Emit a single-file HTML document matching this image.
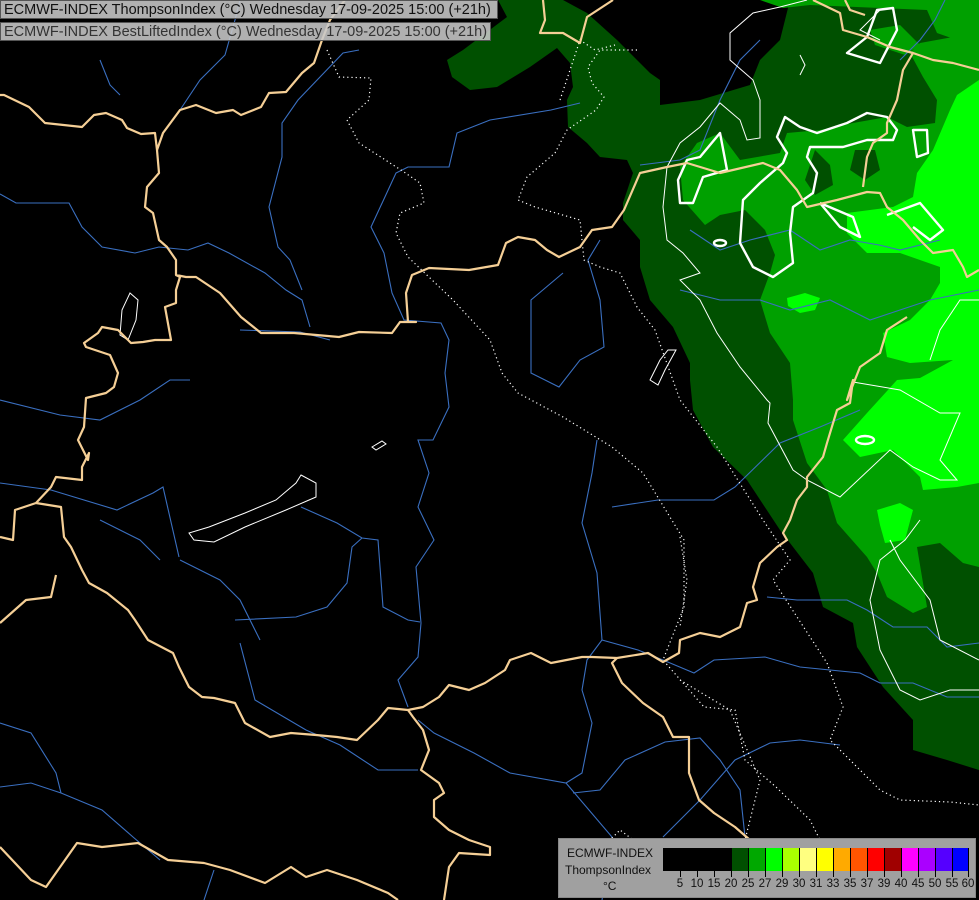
<!DOCTYPE html>
<html><head><meta charset="utf-8"><style>
html,body{margin:0;padding:0;background:#000;}
body{width:979px;height:900px;position:relative;overflow:hidden;font-family:"Liberation Sans",sans-serif;}
svg{position:absolute;left:0;top:0;}
.hdr{position:absolute;left:0;height:19px;background:rgba(200,200,200,0.88);color:#111;font-size:14.5px;line-height:19px;padding-left:3px;white-space:nowrap;border:1px solid #555;box-sizing:border-box;}
.leg{position:absolute;left:558px;top:838px;width:418px;height:60px;background:#a0a0a0;border:1px solid #888;box-sizing:border-box;}
.lt{position:absolute;font-size:12px;color:#111;}
.sw{position:absolute;top:9px;height:23px;width:17px;border-left:1px solid #000;box-sizing:border-box;}
.tk{position:absolute;top:32px;width:1px;height:6px;background:#000;}
.lb{position:absolute;top:39px;font-size:11.5px;color:#111;width:20px;text-align:center;}
</style></head><body>
<svg width="979" height="900" viewBox="0 0 979 900">
<!-- dark green -->
<polygon fill="#005000" points="498,0 563,0 587,13 617,40 650,73 660,80 660,105 700,100 750,85 760,60 780,40 790,0 979,0 979,770 947,760 913,750 913,720 883,687 857,647 853,623 823,607 813,573 780,530 747,480 713,447 693,410 690,380 690,363 673,327 650,300 640,267 640,240 623,220 623,203 633,173 627,160 600,157 587,143 568,127 567,100 573,87 570,63 557,48 530,67 497,87 470,90 452,77 447,60 463,50 507,17"/>
<!-- medium green -->
<polygon fill="#00a000" points="760,0 979,0 979,40 957,40 937,33 927,10 880,8 810,5 783,8"/>
<polygon fill="#00a000" points="870,30 900,25 920,45 905,55 875,45"/>
<polygon fill="#00a000" points="979,40 953,37 920,43 910,53 923,77 937,100 935,123 907,127 887,117 853,123 820,130 787,133 780,153 740,160 720,133 697,143 680,167 683,200 705,225 720,215 745,210 765,230 775,255 770,273 760,300 770,333 790,363 793,400 793,420 807,463 827,490 837,523 867,557 877,573 887,597 913,613 927,607 917,547 940,543 963,563 979,567"/>
<polygon fill="#005000" points="815,150 830,165 833,185 815,195 805,180"/>
<polygon fill="#005000" points="855,150 875,150 880,170 865,180 850,170"/>
<!-- bright green -->
<polygon fill="#00ff00" points="979,80 957,95 950,110 933,150 917,173 913,197 893,207 847,213 847,233 867,253 900,253 940,267 940,283 930,300 910,320 883,333 887,357 910,363 953,360 920,378 897,380 867,413 843,440 860,457 893,450 920,477 923,490 957,487 979,483"/>
<polygon fill="#00ff00" points="787,298 805,293 820,298 815,310 800,313 788,306"/>
<polygon fill="#00ff00" points="877,510 900,503 913,510 905,540 885,543 880,525"/>
<!-- rivers -->
<g fill="none" stroke="#3a6fc0" stroke-width="1.1">
<polyline points="0,194 16,203 69,203 82,227 102,247 135,253 159,247 188,250 208,243 229,253 265,273 286,290 302,300 310,327"/>
<polyline points="359,50 343,53 298,100 282,123 282,157 269,207 278,247 290,260 302,290"/>
<polyline points="580,103 551,110 490,120 457,133 449,167 408,167 396,173 371,227 384,253 392,293 404,320 441,323 449,340 445,373 449,407 433,440 418,440 429,473 418,507 434,540 416,567 421,623 418,657 398,680 408,707"/>
<polyline points="563,273 531,300 531,373 559,387 580,360 604,347 600,300 588,260 600,240"/>
<polyline points="0,483 51,490 117,510 153,493 163,487 179,557"/>
<polyline points="301,507 337,523 362,538 378,540 383,607 408,620 420,622"/>
<polyline points="235,620 296,617 327,607 347,583 352,547 362,538"/>
<polyline points="240,643 255,700 306,730 340,745 378,770 418,770"/>
<polyline points="597,440 592,473 582,523 597,573 602,640 587,660 582,690 592,723 582,773 566,783 510,773 474,753 434,733 418,720"/>
<polyline points="602,640 638,650 663,660 694,673 714,660 765,657 800,667 860,673 880,683 913,683 947,697 979,697"/>
<polyline points="612,507 658,500 714,500 735,487 780,443 820,427 860,410"/>
<polyline points="767,597 797,600 847,600 867,610 893,627 927,627 947,647 979,643"/>
<polyline points="0,723 31,733 56,773 61,793 102,810 133,837 160,860"/>
<polyline points="0,787 31,783 61,793"/>
<polyline points="204,900 214,870"/>
<polyline points="566,783 612,837 602,900"/>
<polyline points="663,837 700,800 735,760 770,743 800,740 840,745"/>
<polyline points="573,793 600,790 625,760 665,742 700,738 720,760 740,790 745,837"/>
<polyline points="0,400 60,415 100,420 140,400 170,380 190,380"/>
<polyline points="180,110 200,80 225,55 235,20 240,0"/>
<polyline points="100,60 110,85 120,95"/>
<polyline points="640,165 680,160 700,150 720,100 740,60 760,40"/>
<polyline points="690,230 720,250 750,240 790,230 820,250 850,240 879,245 900,250 940,240"/>
<polyline points="680,290 720,300 760,300 790,310 830,300 870,320 900,310 930,300 979,290"/>
<polyline points="900,60 920,40 935,20 945,0"/>
<polyline points="240,330 300,332 330,340"/>
<polyline points="180,560 220,580 240,600 260,640"/>
<polyline points="100,520 140,540 160,560"/>
</g>
<!-- dotted white -->
<g fill="none" stroke="#fff" stroke-width="1.2" stroke-dasharray="1.2,3">
<polyline points="327,50 339,77 371,78 369,100 347,120 359,143 404,172 420,183 424,203 400,213 396,233 408,257 453,300 490,340 502,373 518,393 563,417 612,447 643,473 684,540 684,607 663,660 704,707 735,710 745,760 776,787 810,820 830,860"/>
<polyline points="637,50 600,50 588,67 592,83 604,97 596,110 567,130 555,153 527,177 518,200 535,207 580,220 584,260 600,267 620,273 637,307 655,330 680,400 717,447 763,520 790,560 773,580 827,663 843,707 830,740 853,763 880,790 900,800 950,802 979,805"/>
<polyline points="560,100 580,40 595,50 615,45"/>
<polyline points="680,537 687,580 680,627"/>
<polyline points="680,680 730,710 760,780 745,840"/>
<polyline points="600,850 620,830 640,845"/>
</g>
<!-- white thin contours -->
<g fill="none" stroke="#fff" stroke-width="1">
<polyline points="807,0 780,7 753,13 730,33 730,60 753,80 760,100 760,138 747,140 740,120 720,103 700,127 680,143 667,167 663,207 667,240 683,253 700,273 680,280 700,300 717,333 740,367 767,400 770,403 768,423 793,470 807,480 840,497 890,450 913,467 940,480 957,480 940,460 960,413 940,413 900,390 853,382"/>
<polyline points="920,520 905,540 880,560 870,600 880,650 900,690 920,700 950,690 979,690"/>
<polyline points="890,540 900,560 930,600 940,640 979,660"/>
<polyline points="980,300 960,300 940,330 930,360"/>
<polyline points="880,10 860,30 880,40"/>
<polygon points="301,475 316,483 316,497 286,510 245,527 214,542 194,540 189,533 209,527 245,513 276,500 296,483"/>
<polygon points="130,293 138,300 136,320 128,340 120,335 122,310"/>
<polygon points="372,447 382,441 386,444 376,450"/>
<polygon points="650,380 660,360 668,350 676,350 665,370 658,385"/>
<polyline points="800,55 805,65 800,75"/>
</g>
<!-- white thick contours -->
<g fill="none" stroke="#fff" stroke-width="2.4" stroke-linejoin="round">
<polygon points="777,137 785,117 800,127 817,133 847,123 867,113 887,117 897,130 893,140 867,140 843,147 810,147 807,157 817,173 813,193 793,207 790,233 793,263 773,277 753,267 740,243 743,200 760,183 783,163 787,153"/>
<polygon points="720,133 727,170 703,177 693,203 680,203 678,180 687,160 700,157"/>
<polygon points="877,10 893,8 897,30 880,63 847,53 867,37"/>
<polygon points="913,130 927,130 928,153 917,157"/>
<polyline points="820,203 853,217 860,237 840,227 820,203"/>
<polyline points="887,215 920,203 943,230 930,240 913,227"/>
<ellipse cx="865" cy="440" rx="9" ry="4"/>
<ellipse cx="720" cy="243" rx="6" ry="3"/>
</g>
<!-- borders -->
<g fill="none" stroke="#f5cf96" stroke-width="2.2" stroke-linejoin="round">
<polyline points="0,95 4,95 29,107 45,123 82,127 94,115 106,113 122,120 127,128 141,134 155,133 157,150 159,173 147,187 145,207 153,213 159,240 167,247 176,260 176,275 186,277 196,277 220,293 241,317 261,333 294,333 339,337 359,332 392,333 400,322 416,322 408,322 406,293 412,275 429,268 469,270 498,265 506,243 518,237 535,240 547,250 559,257 580,247 592,230 612,227 624,210 640,173 667,167 687,163 720,173 763,163 780,170 797,190 807,207 837,200 867,192 880,193 887,207 903,220 920,240 933,253 953,250 963,267 967,277 979,270"/>
<polyline points="157,150 163,133 180,110 196,105 216,113 233,110 241,115 261,107 269,93 286,92 302,73 314,63 322,40 330,20 345,0"/>
<polyline points="176,275 180,277 176,290 176,303 165,307 171,340 155,340 143,342 131,343 118,330 102,327 98,333 84,343 86,347 110,355 118,373 114,387 106,393 86,398 84,427 78,440 88,460 89,453 82,467 82,480 56,477 51,487 36,503 15,510 13,540 0,537"/>
<polyline points="36,503 61,507 64,537 71,547 82,570 89,583 107,593 128,610 135,620 148,640 173,653 179,667 189,687 202,697 214,698 235,703 245,723 270,737 291,733 316,735 337,737 357,740 378,720 388,708 408,710 423,707 439,697 449,685 469,690 485,683 505,670 510,660 531,653 551,663 582,657 592,657 617,658 648,653 663,662 679,653 680,640 700,633 720,637 740,627 747,603 757,600 753,587 760,563 777,547 787,540 783,533 790,520 797,500 807,487 807,477 823,457 827,443 837,410 850,403 853,380 847,400 860,367 880,353 887,330 907,317"/>
<polyline points="56,575 51,597 26,600 0,623"/>
<polyline points="408,710 413,717 423,730 429,750 421,770 439,783 444,793 434,800 434,817 449,830 469,840 490,847 490,855 459,853 449,867 444,900"/>
<polyline points="617,658 612,663 622,683 643,703 663,717 673,737 689,737 689,773 699,800 714,813 735,827 750,840"/>
<polyline points="0,847 31,880 46,887 77,843 102,847 138,843 168,860 204,863 230,870 265,883 291,867 306,877 327,870 357,880 388,893 398,900"/>
<polyline points="543,0 545,20 540,33 563,33 580,43 587,17 613,0"/>
<polyline points="813,0 840,13 843,30 867,37 890,47 913,53 933,60 953,63 979,70"/>
<polyline points="913,53 903,70 897,100 887,123 887,133 873,143 867,157 863,187"/>
<polyline points="845,0 850,10 865,15"/>
</g>
</svg>
<div class="hdr" style="top:0;width:498px;">ECMWF-INDEX ThompsonIndex (°C) Wednesday 17-09-2025 15:00 (+21h)</div>
<div class="hdr" style="top:22px;width:491px;color:#333;">ECMWF-INDEX BestLiftedIndex (°C) Wednesday 17-09-2025 15:00 (+21h)</div>
<div class="leg">
<div class="lt" style="left:8px;top:7px;">ECMWF-INDEX</div>
<div class="lt" style="left:6px;top:24px;">ThompsonIndex</div>
<div class="lt" style="left:44px;top:40px;">°C</div>
<div style="position:absolute;left:104px;top:9px;width:306px;height:23px;border:1px solid #000;box-sizing:border-box;background:#000;"></div>
<div class="sw" style="left:104px;background:#000"></div>
<div class="sw" style="left:121px;background:#000"></div>
<div class="sw" style="left:138px;background:#000"></div>
<div class="sw" style="left:155px;background:#000"></div>
<div class="sw" style="left:172px;background:#005000"></div>
<div class="sw" style="left:189px;background:#00a800"></div>
<div class="sw" style="left:206px;background:#00ff00"></div>
<div class="sw" style="left:223px;background:#aaff00"></div>
<div class="sw" style="left:240px;background:#ffff80"></div>
<div class="sw" style="left:257px;background:#ffff00"></div>
<div class="sw" style="left:274px;background:#ffaa00"></div>
<div class="sw" style="left:291px;background:#ff5500"></div>
<div class="sw" style="left:308px;background:#ff0000"></div>
<div class="sw" style="left:325px;background:#a00000"></div>
<div class="sw" style="left:342px;background:#ff00ff"></div>
<div class="sw" style="left:359px;background:#aa00ff"></div>
<div class="sw" style="left:376px;background:#5500ff"></div>
<div class="sw" style="left:393px;background:#0000ff;width:17px;border-right:1px solid #000"></div>
<div class="tk" style="left:121px"></div><div class="lb" style="left:111px">5</div>
<div class="tk" style="left:138px"></div><div class="lb" style="left:128px">10</div>
<div class="tk" style="left:155px"></div><div class="lb" style="left:145px">15</div>
<div class="tk" style="left:172px"></div><div class="lb" style="left:162px">20</div>
<div class="tk" style="left:189px"></div><div class="lb" style="left:179px">25</div>
<div class="tk" style="left:206px"></div><div class="lb" style="left:196px">27</div>
<div class="tk" style="left:223px"></div><div class="lb" style="left:213px">29</div>
<div class="tk" style="left:240px"></div><div class="lb" style="left:230px">30</div>
<div class="tk" style="left:257px"></div><div class="lb" style="left:247px">31</div>
<div class="tk" style="left:274px"></div><div class="lb" style="left:264px">33</div>
<div class="tk" style="left:291px"></div><div class="lb" style="left:281px">35</div>
<div class="tk" style="left:308px"></div><div class="lb" style="left:298px">37</div>
<div class="tk" style="left:325px"></div><div class="lb" style="left:315px">39</div>
<div class="tk" style="left:342px"></div><div class="lb" style="left:332px">40</div>
<div class="tk" style="left:359px"></div><div class="lb" style="left:349px">45</div>
<div class="tk" style="left:376px"></div><div class="lb" style="left:366px">50</div>
<div class="tk" style="left:393px"></div><div class="lb" style="left:383px">55</div>
<div class="tk" style="left:409px"></div><div class="lb" style="left:399px">60</div>
</div>
</body></html>
